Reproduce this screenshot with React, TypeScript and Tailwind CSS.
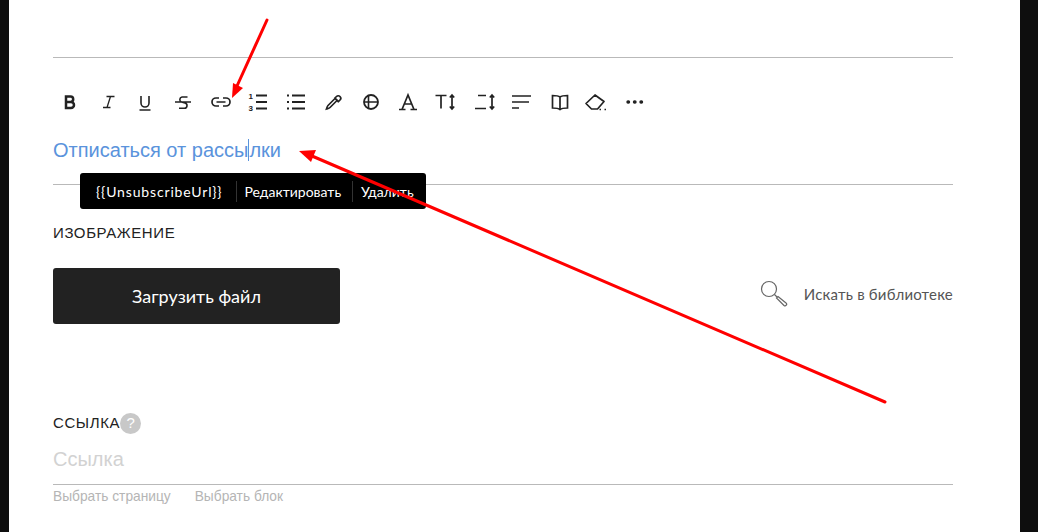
import React from 'react'

const icons: { name: string; el: React.ReactNode }[] = [
  { name: 'bold', el: <path d="M8 6.500h4.500a2.700 2.700 0 0 1 0 5.400H8zM8 11.900h5a3 3 0 0 1 0 6H8z" strokeWidth="2.500" /> },
  { name: 'italic', el: <path d="M10.500 6.500h8M7 17.500h7.500M14.500 6.500l-3.500 11" strokeWidth="1.300" /> },
  { name: 'underline', el: <path d="M8 6v7a4 4 0 0 0 8 0V6M6.500 20h11" strokeWidth="1.600" /> },
  { name: 'strike', el: <path d="M16.500 7H11a2.600 2.600 0 0 0-.5 5l3.500 1a2.700 2.700 0 0 1-.5 5.300H8M4 12h16" strokeWidth="1.600" /> },
  { name: 'link', el: <path d="M11 8H8a4 4 0 0 0 0 8h3M15 8h3a4 4 0 0 1 0 8h-3M8.500 12h9" strokeWidth="1.700" /> },
  {
    name: 'ol',
    el: (
      <>
        <path d="M10 5.500h11M10 12h11M10 18.500h11" strokeWidth="1.800" />
        <text x="2.500" y="9" fill="#222" stroke="none" fontSize="8" fontWeight="700" fontFamily="Liberation Sans">1</text>
        <text x="2.500" y="21" fill="#222" stroke="none" fontSize="8" fontWeight="700" fontFamily="Liberation Sans">3</text>
      </>
    ),
  },
  { name: 'ul', el: <path d="M8 5.500h13M8 12h13M8 18.500h13M3 5.500h2M3 12h2M3 18.500h2" strokeWidth="1.900" /> },
  { name: 'dropper', el: <path d="M14 8.500l3.500 3.500M15.500 6.500a2.200 2.200 0 0 1 3.500 3.500l-1.500 1.500-3.500-3.500zM14.500 8L7 15.500c-1 1-1 2-1.500 3.500 1.500-.5 2.500-.5 3.500-1.500l7.500-7.500" strokeWidth="1.700" /> },
  { name: 'globe', el: <><circle cx="12" cy="12" r="7" strokeWidth="1.800" /><path d="M9.500 5.500v13M5 12h14" strokeWidth="1.600" /></> },
  { name: 'font', el: <path d="M3 19.500h6.500M14.500 19.500H21M6 19.500L12 5l6 14.500M8.500 14h7" strokeWidth="1.700" /> },
  { name: 'size', el: <path d="M1.500 5.500h11M7 5.500v13M18 5.500v13M15.800 7.500L18 5l2.200 2.500M15.800 16.500L18 19l2.200-2.500" strokeWidth="1.700" /> },
  { name: 'height', el: <path d="M6 5.500h8M3 18.500h11M20 5.500v13M17.800 7.500L20 5l2.200 2.500M17.800 16.500L20 19l2.200-2.500" strokeWidth="1.700" /> },
  { name: 'align', el: <path d="M3 6h19M3 12h17M3 18h7" strokeWidth="1.700" /> },
  { name: 'book', el: <path d="M13 7C11.500 5.800 9 5.500 5.500 5.500v12.500c3.500 0 6 .3 7.500 1.500 1.500-1.200 4-1.500 7.500-1.500V5.500C17 5.500 14.500 5.800 13 7zM13 7v12.500" strokeWidth="1.700" /> },
  { name: 'eraser', el: <path d="M2 13.500L11 5l9 6.500-6.500 7.500H7.500zM15.500 19.500h1.500M20.500 19.500h1.500" strokeWidth="1.700" strokeLinejoin="round" /> },
  { name: 'more', el: <path d="M6 12h.5M12.500 12h.5M19 12h.5" strokeWidth="3.400" strokeLinecap="round" /> },
]

export default function App() {
  return (
    <div className="relative flex h-[532px] w-[1038px] overflow-hidden bg-white font-['Liberation_Sans',sans-serif]">
      <div className="w-[9px] bg-[#0e0e0e]" />
      <main className="flex-1 pl-[44px] pr-[67px] pt-[57px]">
        <div className="border-t border-[#b9b9b9]" />
        <div className="mt-[32px] flex items-center gap-[13.6px] pl-[5px]">
          {icons.map((icon) => (
            <svg key={icon.name} viewBox="0 0 24 24" fill="none" stroke="#222" className="h-[24px] w-[24px] shrink-0">
              {icon.el}
            </svg>
          ))}
        </div>
        <div className="relative mt-[20px] h-[51px] border-b border-[#b9b9b9]">
          <p className="text-[20px] leading-[32px] text-[#5a93dc]">
            Отписаться от рассы<span className="border-l border-[#5a93dc]">л</span>ки
          </p>
          <div className="absolute left-[27px] top-[39px] flex h-[36px] w-[346px] items-center rounded-[3px] bg-black pl-[16px] font-['Lato',sans-serif] text-[14px] text-white">
            <span className="pr-[14px] tracking-[0.85px]">{'{{UnsubscribeUrl}}'}</span>
            <span className="border-l border-[#333] pl-[7px] pr-[11px]">Редактировать</span>
            <span className="border-l border-[#333] pl-[8px]">Удалить</span>
          </div>
        </div>
        <h3 className="mt-[39px] text-[15px] leading-[18px] tracking-[0.6px] text-[#222]">ИЗОБРАЖЕНИЕ</h3>
        <div className="mt-[26px] flex items-center justify-between">
          <button className="h-[56px] w-[287px] rounded-[3px] bg-[#222] font-['Lato',sans-serif] text-[18px] text-white">
            Загрузить файл
          </button>
          <div className="mb-[4px] flex items-center gap-[16px] font-['Lato',sans-serif] text-[15px] tracking-[0.2px] text-[#555]">
            <svg viewBox="0 0 28 28" fill="none" stroke="#666" strokeWidth="1.200" className="h-[28px] w-[28px]">
              <circle cx="9" cy="9" r="7.500" />
              <path d="M14.500 14.500l3 3M18 16.500l8 6.500a1.500 1.500 0 0 1-2 2.500l-7.500-7.500z" />
            </svg>
            <span>Искать в библиотеке</span>
          </div>
        </div>
        <div className="mt-[88px] flex items-center text-[15px] leading-[22px] tracking-[0.6px] text-[#222]">
          ССЫЛКА
          <span className="flex h-[21px] w-[21px] items-center justify-center rounded-full bg-[#c8c8c8] text-[15px] tracking-normal text-white">?</span>
        </div>
        <div className="mt-[9px] h-[42px] border-b border-[#b9b9b9] text-[20px] leading-[32px] text-[#d2d2d2]">Ссылка</div>
        <div className="mt-[4px] flex gap-[24px] text-[13.75px] leading-[16px] text-[#b5b5b5]">
          <span>Выбрать страницу</span>
          <span>Выбрать блок</span>
        </div>
      </main>
      <div className="w-[18px] bg-[#0e0e0e]" />
      <svg className="pointer-events-none absolute inset-0 h-[532px] w-[1038px]" viewBox="0 0 1038 532" fill="none">
        <path d="M267 20L237 86" stroke="#f00" strokeWidth="3" strokeLinecap="round" />
        <path d="M232 98l1-15 10 5z" fill="#f00" />
        <path d="M885 402L312 156" stroke="#f00" strokeWidth="3" strokeLinecap="round" />
        <path d="M299 151l17-1-5 12z" fill="#f00" />
      </svg>
    </div>
  )
}
